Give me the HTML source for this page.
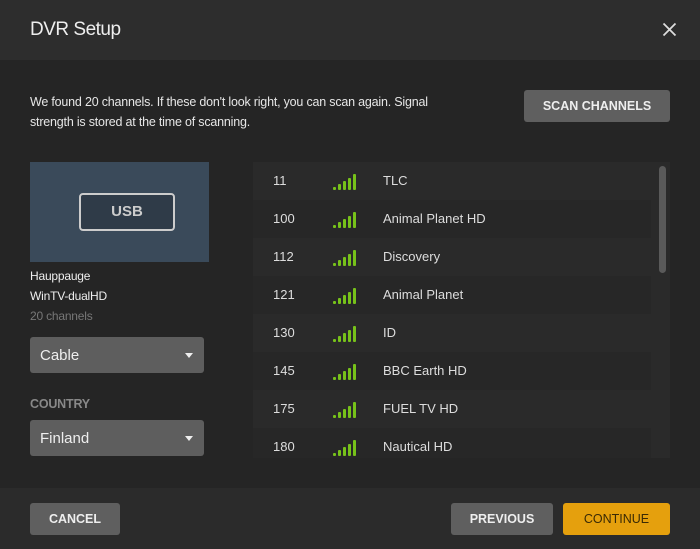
<!DOCTYPE html>
<html><head><style>
*{margin:0;padding:0;box-sizing:border-box}
body{width:700px;height:549px;background:#252525;font-family:"Liberation Sans",sans-serif;color:#ddd;position:relative;overflow:hidden}
.hdr{position:absolute;left:0;top:0;width:700px;height:60px;background:#2d2d2d}
.hdr h1{position:absolute;left:30px;top:19px;font-size:19px;font-weight:normal;color:#eee;letter-spacing:-0.5px}
.x{position:absolute;left:662px;top:22px}
.msg{position:absolute;left:30px;top:92px;font-size:12.5px;line-height:20px;color:#e6e6e6;width:430px;letter-spacing:-0.2px}
.btn{position:absolute;border-radius:3px;font-size:12.5px;font-weight:bold;text-align:center;color:#eee;background:#5f5f5f}
.usb{position:absolute;left:30px;top:162px;width:179px;height:100px;background:#3a4a5a}
.usb div{position:absolute;left:49px;top:31px;width:96px;height:38px;border:2px solid #ccc;border-radius:4px;background:#2f3b48;color:#ccc;font-weight:bold;font-size:15px;text-align:center;line-height:34px}
.dev{position:absolute;left:30px;font-size:12px;color:#eee;letter-spacing:-0.2px}
.sel{position:absolute;left:30px;width:174px;height:36px;background:#5e5e5e;border-radius:3px;font-size:15px;color:#eee;padding-left:10px;line-height:38px}
.sel:after{content:"";position:absolute;right:11px;top:16px;border-left:4px solid transparent;border-right:4px solid transparent;border-top:5px solid #eee}
.list{position:absolute;left:253px;top:162px;width:417px;height:296px;background:#2a2a2a;overflow:hidden}
.row{height:38px;position:relative;font-size:13px;color:#ddd;line-height:38px}
.row.d{background:#272727;width:398px}
.row .n{position:absolute;left:20px}
.row .c{position:absolute;left:130px}
.row svg{position:absolute;left:80px;top:11px}
.thumb{position:absolute;left:659px;top:166px;width:7px;height:107px;background:#5a5a5a;border-radius:4px}
.ftr{position:absolute;left:0;top:488px;width:700px;height:61px;background:#2b2b2b}
</style></head><body>
<div class="hdr"><h1>DVR Setup</h1>
<svg class="x" width="15" height="15" viewBox="0 0 15 15"><path d="M1.5 1.5L13.5 13.5M13.5 1.5L1.5 13.5" stroke="#ddd" stroke-width="1.8"/></svg></div>
<div class="msg">We found 20 channels. If these don't look right, you can scan again. Signal strength is stored at the time of scanning.</div>
<div class="btn" style="left:524px;top:90px;width:146px;height:32px;line-height:32px">SCAN CHANNELS</div>
<div class="usb"><div>USB</div></div>
<div class="dev" style="top:269px">Hauppauge</div>
<div class="dev" style="top:289px">WinTV-dualHD</div>
<div class="dev" style="top:309px;color:#777">20 channels</div>
<div class="sel" style="top:337px">Cable</div>
<div class="dev" style="top:397px;color:#888;font-weight:bold;font-size:12.5px">COUNTRY</div>
<div class="sel" style="top:420px">Finland</div>
<div class="list">
<div class="row"><span class="n">11</span><svg width="24" height="18"><g fill="#77c21a"><rect x="0" y="14" width="3" height="3" rx="1"/><rect x="5" y="11" width="3" height="6" rx="1"/><rect x="10" y="8" width="3" height="9" rx="1"/><rect x="15" y="5" width="3" height="12" rx="1"/><rect x="20" y="1" width="3" height="16" rx="1"/></g></svg><span class="c">TLC</span></div>
<div class="row d"><span class="n">100</span><svg width="24" height="18"><g fill="#77c21a"><rect x="0" y="14" width="3" height="3" rx="1"/><rect x="5" y="11" width="3" height="6" rx="1"/><rect x="10" y="8" width="3" height="9" rx="1"/><rect x="15" y="5" width="3" height="12" rx="1"/><rect x="20" y="1" width="3" height="16" rx="1"/></g></svg><span class="c">Animal Planet HD</span></div>
<div class="row"><span class="n">112</span><svg width="24" height="18"><g fill="#77c21a"><rect x="0" y="14" width="3" height="3" rx="1"/><rect x="5" y="11" width="3" height="6" rx="1"/><rect x="10" y="8" width="3" height="9" rx="1"/><rect x="15" y="5" width="3" height="12" rx="1"/><rect x="20" y="1" width="3" height="16" rx="1"/></g></svg><span class="c">Discovery</span></div>
<div class="row d"><span class="n">121</span><svg width="24" height="18"><g fill="#77c21a"><rect x="0" y="14" width="3" height="3" rx="1"/><rect x="5" y="11" width="3" height="6" rx="1"/><rect x="10" y="8" width="3" height="9" rx="1"/><rect x="15" y="5" width="3" height="12" rx="1"/><rect x="20" y="1" width="3" height="16" rx="1"/></g></svg><span class="c">Animal Planet</span></div>
<div class="row"><span class="n">130</span><svg width="24" height="18"><g fill="#77c21a"><rect x="0" y="14" width="3" height="3" rx="1"/><rect x="5" y="11" width="3" height="6" rx="1"/><rect x="10" y="8" width="3" height="9" rx="1"/><rect x="15" y="5" width="3" height="12" rx="1"/><rect x="20" y="1" width="3" height="16" rx="1"/></g></svg><span class="c">ID</span></div>
<div class="row d"><span class="n">145</span><svg width="24" height="18"><g fill="#77c21a"><rect x="0" y="14" width="3" height="3" rx="1"/><rect x="5" y="11" width="3" height="6" rx="1"/><rect x="10" y="8" width="3" height="9" rx="1"/><rect x="15" y="5" width="3" height="12" rx="1"/><rect x="20" y="1" width="3" height="16" rx="1"/></g></svg><span class="c">BBC Earth HD</span></div>
<div class="row"><span class="n">175</span><svg width="24" height="18"><g fill="#77c21a"><rect x="0" y="14" width="3" height="3" rx="1"/><rect x="5" y="11" width="3" height="6" rx="1"/><rect x="10" y="8" width="3" height="9" rx="1"/><rect x="15" y="5" width="3" height="12" rx="1"/><rect x="20" y="1" width="3" height="16" rx="1"/></g></svg><span class="c">FUEL TV HD</span></div>
<div class="row d"><span class="n">180</span><svg width="24" height="18"><g fill="#77c21a"><rect x="0" y="14" width="3" height="3" rx="1"/><rect x="5" y="11" width="3" height="6" rx="1"/><rect x="10" y="8" width="3" height="9" rx="1"/><rect x="15" y="5" width="3" height="12" rx="1"/><rect x="20" y="1" width="3" height="16" rx="1"/></g></svg><span class="c">Nautical HD</span></div>
</div>
<div class="thumb"></div>
<div class="ftr"></div>
<div class="btn" style="left:30px;top:503px;width:90px;height:32px;line-height:32px">CANCEL</div>
<div class="btn" style="left:451px;top:503px;width:102px;height:32px;line-height:32px">PREVIOUS</div>
<div class="btn" style="left:563px;top:503px;width:107px;height:32px;line-height:32px;background:#e5a00d;color:#3a2a05;font-weight:normal">CONTINUE</div>
</body></html>
